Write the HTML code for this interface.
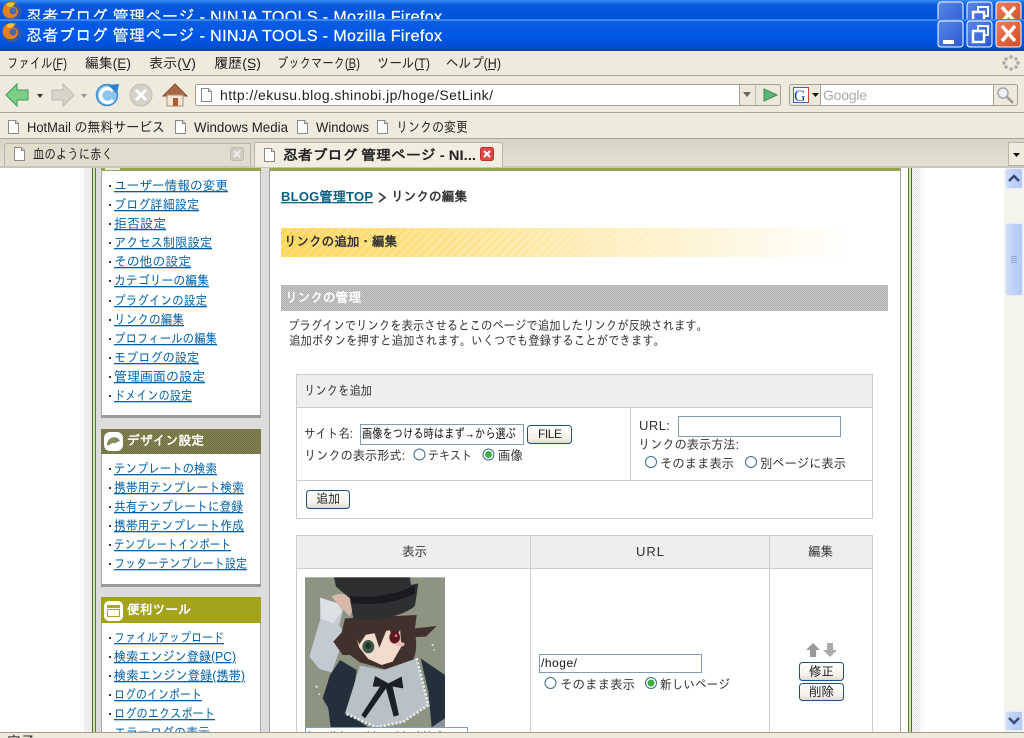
<!DOCTYPE html>
<html lang="ja"><head><meta charset="utf-8"><title>忍者ブログ 管理ページ</title>
<style>
html,body{margin:0;padding:0;width:1024px;height:738px;overflow:hidden;background:#fff}
svg{display:block;position:absolute;left:0;top:0}
text{font-family:"Liberation Sans","IPAGothic","Noto Sans CJK JP",sans-serif;font-size:13px;fill:#333;white-space:pre}
.m{font-size:14px;fill:#222}
.t{font-size:16px;fill:#fff;stroke:#fff;stroke-width:.25px}
.l{fill:#0060a8;text-decoration:underline}
.h{fill:#fff;font-weight:bold;font-size:13px}
.b{font-weight:bold}
</style></head><body>
<svg width="1024" height="738" viewBox="0 0 1024 738" xmlns="http://www.w3.org/2000/svg">
<defs>
<linearGradient id="tb" x1="0" y1="0" x2="0" y2="1"><stop offset="0" stop-color="#1a70ea"/><stop offset=".1" stop-color="#0a5ce0"/><stop offset=".5" stop-color="#0058e8"/><stop offset=".85" stop-color="#0050d8"/><stop offset="1" stop-color="#0a3fa8"/></linearGradient>
<linearGradient id="tb1" x1="0" y1="0" x2="0" y2="1"><stop offset="0" stop-color="#3a8cf2"/><stop offset=".25" stop-color="#0a58dc"/><stop offset="1" stop-color="#0052dc"/></linearGradient>
<linearGradient id="btn" x1="0" y1="0" x2="0" y2="1"><stop offset="0" stop-color="#fff"/><stop offset=".7" stop-color="#f3f1e8"/><stop offset="1" stop-color="#dcd8c8"/></linearGradient>
<linearGradient id="tabbar" x1="0" y1="0" x2="0" y2="1"><stop offset="0" stop-color="#d8d5c5"/><stop offset="1" stop-color="#e4e1d2"/></linearGradient>
<linearGradient id="yel" x1="0" y1="0" x2="1" y2="0"><stop offset="0" stop-color="#fdd555"/><stop offset=".45" stop-color="#fde9a8"/><stop offset="1" stop-color="#ffffff"/></linearGradient>
<linearGradient id="sb" x1="0" y1="0" x2="1" y2="0"><stop offset="0" stop-color="#d2dffb"/><stop offset=".5" stop-color="#bdd0f8"/><stop offset="1" stop-color="#b4c8f4"/></linearGradient>
<linearGradient id="blue" x1="0" y1="0" x2="1" y2="1"><stop offset="0" stop-color="#5a86e8"/><stop offset="1" stop-color="#2a58d0"/></linearGradient>
<linearGradient id="red" x1="0" y1="0" x2="1" y2="1"><stop offset="0" stop-color="#ea8060"/><stop offset="1" stop-color="#d04a20"/></linearGradient>
<pattern id="ol" width="2" height="2" patternUnits="userSpaceOnUse"><rect width="2" height="2" fill="#84844e"/><rect width="1" height="1" fill="#6f6f45"/><rect x="1" y="1" width="1" height="1" fill="#6f6f45"/></pattern>
<pattern id="ye" width="2" height="2" patternUnits="userSpaceOnUse"><rect width="2" height="2" fill="#aaaa22"/><rect width="1" height="1" fill="#9c9c18"/><rect x="1" y="1" width="1" height="1" fill="#9c9c18"/></pattern>
<pattern id="gb" width="2" height="2" patternUnits="userSpaceOnUse"><rect width="2" height="2" fill="#c4c4c4"/><rect width="1" height="1" fill="#b2b2b2"/><rect x="1" y="1" width="1" height="1" fill="#b2b2b2"/></pattern>
<pattern id="gt" width="2" height="2" patternUnits="userSpaceOnUse"><rect width="2" height="2" fill="#a4b45a"/><rect width="1" height="1" fill="#84963e"/><rect x="1" y="1" width="1" height="1" fill="#84963e"/></pattern>
<pattern id="dt" width="2" height="2" patternUnits="userSpaceOnUse"><rect width="2" height="2" fill="#f6f6f4"/><rect width="1" height="1" fill="#e4e4e4"/><rect x="1" y="1" width="1" height="1" fill="#e4e4e4"/></pattern>
<pattern id="st" width="6" height="6" patternUnits="userSpaceOnUse" patternTransform="rotate(-45)"><rect width="6" height="3" fill="#fff" opacity=".18"/></pattern>
<g id="doc"><path d="M.5.5H7.5L10.500 3.500V13.500H.5Z" fill="#fff" stroke="#8a8a8a"/><path d="M7.500.5V3.500H10.500" fill="#e0e0e0" stroke="#8a8a8a"/></g>
<g id="fx"><circle cx="10" cy="10" r="9.500" fill="#3a5aa8"/><path d="M2 4C4 0 10-1 15 1 11 1 11 3 12 5 16 5 17 10 15 13 12 17 6 17 3 14 0 11 0 7 2 4Z" fill="#e8801a"/><path d="M5 2C7 0 11 0 13 2L9 5 5 4Z" fill="#f8c040"/><circle cx="11" cy="9" r="3.500" fill="#4a68b8"/></g>
<g id="ro"><circle r="5.500" fill="#fff" stroke="#3a6a94"/></g>
<g id="rs"><circle r="5.500" fill="#fff" stroke="#3a6a94"/><circle r="3.500" fill="#3cb040"/></g>
<g id="wb">
<rect x="938" y="0" width="25" height="26" rx="3" fill="url(#blue)" stroke="#fff"/>
<rect x="967" y="0" width="25" height="26" rx="3" fill="url(#blue)" stroke="#fff"/>
<rect x="996" y="0" width="25" height="26" rx="3" fill="url(#red)" stroke="#fff"/>
<path d="M1002 5L1015 20M1015 5L1002 20" stroke="#fff" stroke-width="3.500"/>
<rect x="973" y="10" width="11" height="11" fill="none" stroke="#fff" stroke-width="2.500"/>
<path d="M978 9V5H988V14H985" fill="none" stroke="#fff" stroke-width="2"/>
<rect x="943" y="19" width="11" height="4" fill="#fff"/>
</g>
<clipPath id="c1"><rect x="0" y="0" width="1024" height="19"/></clipPath>
<clipPath id="c2"><rect x="0" y="168" width="1024" height="564"/></clipPath>
</defs>

<!-- title bars -->
<rect width="1024" height="19" fill="url(#tb1)"/>
<g clip-path="url(#c1)">
<use href="#fx" x="2" y="2"/>
<text x="26" y="22" class="t" textLength="416">忍者ブログ 管理ページ - NINJA TOOLS - Mozilla Firefox</text>
<use href="#wb" y="2"/>
</g>
<rect y="19" width="1024" height="32" fill="url(#tb)"/>
<rect y="19" width="1024" height="2" fill="#3a86f0"/>
<use href="#fx" x="2" y="23"/>
<text x="26" y="41" class="t" textLength="416">忍者ブログ 管理ページ - NINJA TOOLS - Mozilla Firefox</text>
<use href="#wb" y="21"/>

<!-- chrome -->
<rect y="51" width="1024" height="117" fill="#eeebdd"/>
<rect y="75" width="1024" height="1" fill="#aca899"/>
<rect y="112" width="1024" height="1" fill="#aca899"/>
<rect y="138" width="1024" height="1" fill="#aca899"/>
<rect y="139" width="1024" height="27" fill="url(#tabbar)"/>
<rect y="166" width="1024" height="2" fill="#c8c5b5"/>

<text x="7" y="68" class="m" textLength="60" lengthAdjust="spacingAndGlyphs">ファイル(F)</text>
<text x="85" y="68" class="m" textLength="46" lengthAdjust="spacingAndGlyphs">編集(E)</text>
<text x="149" y="68" class="m" textLength="47" lengthAdjust="spacingAndGlyphs">表示(V)</text>
<text x="214" y="68" class="m" textLength="47" lengthAdjust="spacingAndGlyphs">履歴(S)</text>
<text x="277" y="68" class="m" textLength="83" lengthAdjust="spacingAndGlyphs">ブックマーク(B)</text>
<text x="377" y="68" class="m" textLength="53" lengthAdjust="spacingAndGlyphs">ツール(T)</text>
<text x="446" y="68" class="m" textLength="55" lengthAdjust="spacingAndGlyphs">ヘルプ(H)</text>
<g fill="#222"><rect x="54" y="69" width="7" height="1"/><rect x="118" y="69" width="7" height="1"/><rect x="183" y="69" width="7" height="1"/><rect x="248" y="69" width="7" height="1"/><rect x="347" y="69" width="7" height="1"/><rect x="417" y="69" width="7" height="1"/><rect x="488" y="69" width="7" height="1"/></g>
<!-- throbber -->
<g fill="#aaa"><circle cx="1011" cy="57" r="1.700"/><circle cx="1016" cy="59" r="1.700"/><circle cx="1018" cy="63" r="1.700"/><circle cx="1016" cy="67" r="1.700"/><circle cx="1011" cy="69" r="1.700"/><circle cx="1006" cy="67" r="1.700"/><circle cx="1004" cy="63" r="1.700"/><circle cx="1006" cy="59" r="1.700"/></g>

<!-- nav icons -->
<path d="M6 95L17 84V90H28V100H17V106Z" fill="#7ccf88" stroke="#3f9a55"/>
<path d="M37 94H43L40 98Z" fill="#333"/>
<path d="M74 95L63 84V90H52V100H63V106Z" fill="#d8d6cc" stroke="#bcbab0"/>
<path d="M81 94H87L84 98Z" fill="#999"/>
<circle cx="107" cy="95" r="10.500" fill="#8cc4ee" stroke="#3f8ed0" stroke-width="1.500"/>
<path d="M113 91A7 7 0 1 0 113 100" fill="none" stroke="#fff" stroke-width="3.500"/>
<path d="M108 85L119 84 117 94Z" fill="#2f80d0"/>
<circle cx="141" cy="95" r="11" fill="#d4d2c8" stroke="#c0beb4"/>
<path d="M136 90L146 100M146 90L136 100" stroke="#fff" stroke-width="3"/>
<path d="M163 96L175 84 187 96Z" fill="#a86848" stroke="#8a5030"/>
<rect x="167" y="95" width="16" height="11" fill="#f2e6d2" stroke="#b09070"/>
<rect x="173" y="98" width="5" height="8" fill="#b05a38"/>

<!-- url bar -->
<rect x="195.500" y="84.500" width="585" height="21" rx="2" fill="#fff" stroke="#a5a294"/>
<rect x="739.500" y="84.500" width="41" height="21" rx="2" fill="#ece9da" stroke="#a5a294"/>
<rect x="755" y="85" width="1" height="20" fill="#c0bdaf"/>
<path d="M743 92H751L747 97Z" fill="#666"/>
<path d="M764 89L777 95 764 101Z" fill="#5cb878" stroke="#3a8a50"/>
<use href="#doc" x="201" y="88"/>
<text x="220" y="100" class="m" textLength="273">http://ekusu.blog.shinobi.jp/hoge/SetLink/</text>

<!-- search -->
<rect x="789.500" y="84.500" width="228" height="21" rx="2" fill="#ece9da" stroke="#a5a294"/>
<rect x="820.500" y="84.500" width="173" height="21" fill="#fff" stroke="#a5a294"/>
<rect x="793.500" y="87.500" width="15" height="15" fill="#fff" stroke="#3a6aa8"/>
<rect x="808" y="88" width="1" height="15" fill="#d04030"/>
<text x="794" y="101" style="font-family:'Liberation Serif',serif;font-size:16px;fill:#1a4a9a">G</text>
<path d="M812 93H819L815.500 97Z" fill="#111"/>
<text x="823" y="100" style="font-size:14px;fill:#aaa" textLength="44">Google</text>
<circle cx="1003" cy="93" r="5" fill="#eef3f8" stroke="#a5a8ac" stroke-width="1.500"/>
<path d="M1007 97L1013 103" stroke="#a09a88" stroke-width="2.500"/>

<!-- bookmarks -->
<use href="#doc" x="8" y="120"/><text x="27" y="132" class="m" textLength="138" lengthAdjust="spacingAndGlyphs">HotMail の無料サービス</text>
<use href="#doc" x="175" y="120"/><text x="194" y="132" class="m" textLength="94" lengthAdjust="spacingAndGlyphs">Windows Media</text>
<use href="#doc" x="297" y="120"/><text x="316" y="132" class="m" textLength="53" lengthAdjust="spacingAndGlyphs">Windows</text>
<use href="#doc" x="377" y="120"/><text x="396" y="132" class="m" textLength="72" lengthAdjust="spacingAndGlyphs">リンクの変更</text>

<!-- tabs -->
<path d="M4.500 166V146Q4.500 143.500 7 143.500H250.500V166" fill="#e0ddcd" stroke="#b8b5a5"/>
<use href="#doc" x="14" y="147"/>
<text x="33" y="159" class="m" textLength="80" lengthAdjust="spacingAndGlyphs">血のように赤く</text>
<rect x="230.500" y="147.500" width="13" height="13" rx="2" fill="#cfccc0" stroke="#c0bdb0"/>
<path d="M234 151L240 157M240 151L234 157" stroke="#eee" stroke-width="2"/>
<path d="M254.500 167V145Q254.500 142.500 257 142.500H500Q502.500 142.500 502.500 145V167" fill="#f1eee1" stroke="#b8b5a5"/>
<use href="#doc" x="264" y="148"/>
<text x="283" y="160" class="m b" textLength="193" lengthAdjust="spacingAndGlyphs">忍者ブログ 管理ページ - NI...</text>
<rect x="480.500" y="147.500" width="13" height="13" rx="2" fill="#e04848" stroke="#c03030"/>
<path d="M484 151L490 157M490 151L484 157" stroke="#fff" stroke-width="2"/>
<rect x="1008.500" y="142.500" width="16" height="23" fill="#eeebdd" stroke="#b8b5a5"/>
<path d="M1013 153H1020L1016.500 157Z" fill="#111"/>

<!-- page bg -->
<rect y="168" width="1024" height="564" fill="#fff"/>
<rect x="80" y="168" width="4" height="564" fill="#fafafa"/>
<rect x="84" y="168" width="8" height="564" fill="url(#dt)"/>
<rect x="92" y="168" width="1" height="564" fill="#4a6a30"/>
<rect x="93" y="168" width="2" height="564" fill="#d4e4b0"/>
<rect x="95" y="168" width="1" height="564" fill="#4f7a30"/>
<rect x="96" y="168" width="805" height="564" fill="#dcdcdc"/>
<rect x="900" y="168" width="1" height="564" fill="#a0a0a0"/>
<rect x="908" y="168" width="1" height="564" fill="#4f7a30"/>
<rect x="909" y="168" width="2" height="564" fill="#d4e4b0"/>
<rect x="911" y="168" width="1" height="564" fill="#4a6a30"/>
<rect x="912" y="168" width="8" height="564" fill="url(#dt)"/>
<rect x="920" y="168" width="4" height="564" fill="#fafafa"/>
<rect x="269" y="168" width="1" height="564" fill="#a0a0a0"/>
<rect x="270" y="168" width="630" height="564" fill="#fff"/>
<rect x="101" y="168" width="160" height="3" fill="url(#gt)"/>
<rect x="270" y="168" width="630" height="3" fill="url(#gt)"/>
<rect x="105" y="168" width="15" height="2" fill="#e8e8d8"/>

<!-- sidebar -->
<rect x="101" y="171" width="160" height="246" fill="#fff"/>
<rect x="101" y="171" width="1" height="246" fill="#a8a8a8"/><rect x="260" y="171" width="1" height="246" fill="#a8a8a8"/>
<rect x="101" y="415" width="160" height="3" fill="#9a9a9a"/>
<g fill="#333"><rect x="109" y="185" width="2" height="2"/><rect x="109" y="204" width="2" height="2"/><rect x="109" y="223" width="2" height="2"/><rect x="109" y="242" width="2" height="2"/><rect x="109" y="261" width="2" height="2"/><rect x="109" y="280" width="2" height="2"/><rect x="109" y="300" width="2" height="2"/><rect x="109" y="319" width="2" height="2"/><rect x="109" y="338" width="2" height="2"/><rect x="109" y="357" width="2" height="2"/><rect x="109" y="376" width="2" height="2"/><rect x="109" y="395" width="2" height="2"/></g>
<text x="114" y="190" class="l" textLength="114" lengthAdjust="spacingAndGlyphs">ユーザー情報の変更</text>
<text x="114" y="209" class="l" textLength="85" lengthAdjust="spacingAndGlyphs">ブログ詳細設定</text>
<text x="114" y="228" class="l" textLength="52" lengthAdjust="spacingAndGlyphs">拒否設定</text>
<text x="114" y="247" class="l" textLength="98" lengthAdjust="spacingAndGlyphs">アクセス制限設定</text>
<text x="114" y="266" class="l" textLength="77" lengthAdjust="spacingAndGlyphs">その他の設定</text>
<text x="114" y="285" class="l" textLength="95" lengthAdjust="spacingAndGlyphs">カテゴリーの編集</text>
<text x="114" y="305" class="l" textLength="93" lengthAdjust="spacingAndGlyphs">プラグインの設定</text>
<text x="114" y="324" class="l" textLength="70" lengthAdjust="spacingAndGlyphs">リンクの編集</text>
<text x="114" y="343" class="l" textLength="103" lengthAdjust="spacingAndGlyphs">プロフィールの編集</text>
<text x="114" y="362" class="l" textLength="85" lengthAdjust="spacingAndGlyphs">モブログの設定</text>
<text x="114" y="381" class="l" textLength="91" lengthAdjust="spacingAndGlyphs">管理画面の設定</text>
<text x="114" y="400" class="l" textLength="78" lengthAdjust="spacingAndGlyphs">ドメインの設定</text>

<rect x="101" y="429" width="160" height="25" fill="url(#ol)"/>
<rect x="104" y="432" width="19" height="19" rx="6" fill="#fff"/>
<path d="M107 445C107 436 118 435 120 441 118 441 116 444 113 443 111 443 110 446 107 445Z" fill="#8a8a60"/>
<text x="127" y="445" class="h" textLength="77" lengthAdjust="spacingAndGlyphs">デザイン設定</text>
<rect x="101" y="454" width="160" height="132" fill="#fff"/>
<rect x="101" y="454" width="1" height="132" fill="#a8a8a8"/><rect x="260" y="454" width="1" height="132" fill="#a8a8a8"/>
<rect x="101" y="584" width="160" height="3" fill="#9a9a9a"/>
<g fill="#333"><rect x="109" y="468" width="2" height="2"/><rect x="109" y="487" width="2" height="2"/><rect x="109" y="506" width="2" height="2"/><rect x="109" y="525" width="2" height="2"/><rect x="109" y="544" width="2" height="2"/><rect x="109" y="563" width="2" height="2"/></g>
<text x="114" y="473" class="l" textLength="103" lengthAdjust="spacingAndGlyphs">テンプレートの検索</text>
<text x="114" y="492" class="l" textLength="130" lengthAdjust="spacingAndGlyphs">携帯用テンプレート検索</text>
<text x="114" y="511" class="l" textLength="129" lengthAdjust="spacingAndGlyphs">共有テンプレートに登録</text>
<text x="114" y="530" class="l" textLength="130" lengthAdjust="spacingAndGlyphs">携帯用テンプレート作成</text>
<text x="114" y="549" class="l" textLength="117" lengthAdjust="spacingAndGlyphs">テンプレートインポート</text>
<text x="114" y="568" class="l" textLength="133" lengthAdjust="spacingAndGlyphs">フッターテンプレート設定</text>

<rect x="101" y="597" width="160" height="26" fill="url(#ye)"/>
<rect x="104" y="601" width="19" height="20" rx="5" fill="#fff"/>
<rect x="107" y="605" width="13" height="12" fill="#aaaa22"/><rect x="107" y="608" width="13" height="1" fill="#fff"/><rect x="108" y="610" width="11" height="6" fill="#fff"/>
<text x="127" y="614" class="h" textLength="64" lengthAdjust="spacingAndGlyphs">便利ツール</text>
<rect x="101" y="623" width="160" height="109" fill="#fff"/>
<rect x="101" y="623" width="1" height="109" fill="#a8a8a8"/><rect x="260" y="623" width="1" height="109" fill="#a8a8a8"/>
<g fill="#333"><rect x="109" y="637" width="2" height="2"/><rect x="109" y="656" width="2" height="2"/><rect x="109" y="675" width="2" height="2"/><rect x="109" y="694" width="2" height="2"/><rect x="109" y="713" width="2" height="2"/></g>
<text x="114" y="642" class="l" textLength="110" lengthAdjust="spacingAndGlyphs">ファイルアップロード</text>
<text x="114" y="661" class="l" textLength="122" lengthAdjust="spacingAndGlyphs">検索エンジン登録(PC)</text>
<text x="114" y="680" class="l" textLength="131" lengthAdjust="spacingAndGlyphs">検索エンジン登録(携帯)</text>
<text x="114" y="699" class="l" textLength="88" lengthAdjust="spacingAndGlyphs">ログのインポート</text>
<text x="114" y="718" class="l" textLength="101" lengthAdjust="spacingAndGlyphs">ログのエクスポート</text>
<g clip-path="url(#c2)"><text x="114" y="737" class="l" textLength="96" lengthAdjust="spacingAndGlyphs">エラーログの表示</text></g>

<!-- main -->
<text x="281" y="201" class="b" style="fill:#0a6080;text-decoration:underline" textLength="92">BLOG管理TOP</text>
<path d="M379 193L385 197.500 379 202" fill="none" stroke="#333" stroke-width="1.500"/>
<text x="391" y="201" class="b" textLength="76" lengthAdjust="spacingAndGlyphs">リンクの編集</text>
<rect x="281" y="228" width="570" height="29" fill="url(#yel)"/>
<rect x="281" y="228" width="570" height="29" fill="url(#st)"/>
<text x="284" y="246" class="b" textLength="113" lengthAdjust="spacingAndGlyphs">リンクの追加・編集</text>
<rect x="281" y="285" width="607" height="26" fill="url(#gb)"/>
<text x="285" y="302" class="h" textLength="76" lengthAdjust="spacingAndGlyphs">リンクの管理</text>
<text x="288" y="330" textLength="420" lengthAdjust="spacingAndGlyphs">プラグインでリンクを表示させるとこのページで追加したリンクが反映されます。</text>
<text x="289" y="345" textLength="376" lengthAdjust="spacingAndGlyphs">追加ボタンを押すと追加されます。いくつでも登録することができます。</text>

<!-- table 1 -->
<rect x="296.500" y="374.500" width="576" height="144" fill="#fff" stroke="#ccc"/>
<rect x="297" y="375" width="575" height="32" fill="#eee"/>
<rect x="297" y="407" width="575" height="1" fill="#ccc"/>
<rect x="297" y="480" width="575" height="1" fill="#ccc"/>
<rect x="630" y="408" width="1" height="72" fill="#ccc"/>
<text x="304" y="395" textLength="68" lengthAdjust="spacingAndGlyphs">リンクを追加</text>
<text x="304" y="438" textLength="49" lengthAdjust="spacingAndGlyphs">サイト名:</text>
<rect x="360.500" y="424.500" width="163" height="20" fill="#fff" stroke="#7f9db9"/>
<text x="362" y="438" style="fill:#111" textLength="154" lengthAdjust="spacingAndGlyphs">画像をつける時はまず→から選ぶ</text>
<rect x="527.500" y="425.500" width="44" height="18" rx="3" fill="url(#btn)" stroke="#1c5180"/>
<text x="538" y="438" style="font-size:12px;fill:#222" textLength="24">FILE</text>
<text x="304" y="460" textLength="101" lengthAdjust="spacingAndGlyphs">リンクの表示形式:</text>
<use href="#ro" x="419.500" y="454.500"/>
<text x="428" y="460" textLength="44" lengthAdjust="spacingAndGlyphs">テキスト</text>
<use href="#rs" x="488.500" y="454.500"/>
<text x="498" y="460" textLength="25" lengthAdjust="spacingAndGlyphs">画像</text>
<text x="639" y="430" textLength="31">URL:</text>
<rect x="678.500" y="416.500" width="162" height="20" fill="#fff" stroke="#7f9db9"/>
<text x="638" y="449" textLength="101" lengthAdjust="spacingAndGlyphs">リンクの表示方法:</text>
<use href="#ro" x="651" y="462"/>
<text x="660" y="468" textLength="74" lengthAdjust="spacingAndGlyphs">そのまま表示</text>
<use href="#ro" x="751" y="462"/>
<text x="760" y="468" textLength="86" lengthAdjust="spacingAndGlyphs">別ページに表示</text>
<rect x="306.500" y="490.500" width="43" height="18" rx="3" fill="url(#btn)" stroke="#1c5180"/>
<text x="316" y="503" style="fill:#222" textLength="24" lengthAdjust="spacingAndGlyphs">追加</text>

<!-- table 2 -->
<rect x="296.500" y="535.500" width="576" height="210" fill="#fff" stroke="#ccc"/>
<rect x="297" y="536" width="575" height="32" fill="#eee"/>
<rect x="297" y="568" width="575" height="1" fill="#ccc"/>
<rect x="530" y="536" width="1" height="200" fill="#ccc"/>
<rect x="769" y="536" width="1" height="200" fill="#ccc"/>
<text x="402" y="556" textLength="25" lengthAdjust="spacingAndGlyphs">表示</text>
<text x="636" y="556" textLength="28">URL</text>
<text x="808" y="556" textLength="25" lengthAdjust="spacingAndGlyphs">編集</text>

<!-- character image -->
<g transform="translate(300 575) scale(.33333)">
<rect x="15" y="7" width="420" height="450" fill="#8d9481"/>
<path d="M28 245L60 135 62 70 130 100 118 150 135 180 95 292 58 282Z" fill="#c4cad2"/>
<path d="M60 68L115 85 125 110 100 145 62 130Z" fill="#dde1e6"/>
<path d="M95 65C115 50 150 55 165 80L150 125C130 105 110 85 95 65Z" fill="#d8b8a8"/>
<path d="M135 130L350 120 345 160 410 153 378 185 347 186C352 225 345 262 318 282L288 292 180 262 150 240 128 240 100 200 125 172Z" fill="#41312c"/>
<path d="M168 185L300 160 304 215 278 260 245 270 205 252 178 218Z" fill="#f3dccd"/>
<path d="M165 130L332 125 316 215 302 160 282 205 265 152 238 218 216 152 178 208 165 182Z" fill="#41312c"/>
<ellipse cx="205" cy="215" rx="18" ry="20" fill="#3e5a48"/><ellipse cx="205" cy="212" rx="9" ry="10" fill="#23302a"/>
<ellipse cx="284" cy="187" rx="16" ry="19" fill="#5a1820"/><circle cx="288" cy="182" r="4" fill="#d88"/>
<ellipse cx="300" cy="208" rx="14" ry="7" fill="#eeb8b0"/>
<path d="M102 7H330L333 30 355 25 345 92C320 120 220 145 160 132L150 70 108 35Z" fill="#2d2f31"/>
<path d="M150 62C200 72 290 60 345 30L345 55C290 85 210 92 152 84Z" fill="#191b20"/>
<path d="M90 300L120 255 170 285 150 420 205 457H92L85 400 68 370ZM362 250L435 300V430L395 457 385 350Z" fill="#23303c"/>
<path d="M435 430V457H395Z" fill="#8d9298"/>
<path d="M180 272L250 285 350 250 385 390 310 440 230 457 135 415 165 320Z" fill="#b8c0c8"/>
<path d="M350 250L385 390 310 440 230 457 135 415" fill="none" stroke="#e8ecef" stroke-width="8" stroke-dasharray="7 5"/>
<path d="M225 303L265 325 305 305 310 340 278 335 297 420 281 425 258 340 195 430 184 420 240 335 218 335Z" fill="#1b1f26"/>
<circle cx="398" cy="210" r="3.500" fill="#d8e0e0"/><circle cx="403" cy="224" r="2.500" fill="#d8e0e0"/><circle cx="50" cy="335" r="4" fill="#c8d0c8"/><circle cx="58" cy="358" r="2.500" fill="#eee"/>
</g>
<rect x="305.500" y="727.500" width="162" height="10" fill="#fff" stroke="#7f9db9"/>
<text x="308" y="741" style="fill:#111" textLength="150">http://ekusu.blog.shinobi.jp/img</text>

<rect x="539.500" y="654.500" width="162" height="18" fill="#fff" stroke="#7f9db9"/>
<text x="541" y="667" style="fill:#111;font-size:12px" textLength="36">/hoge/</text>
<use href="#ro" x="550.500" y="683"/>
<text x="560" y="689" textLength="75" lengthAdjust="spacingAndGlyphs">そのまま表示</text>
<use href="#rs" x="651" y="683"/>
<text x="660" y="689" textLength="70" lengthAdjust="spacingAndGlyphs">新しいページ</text>

<path d="M806 650L813 643 820 650H816V657H810V650Z" fill="#999"/>
<path d="M823 650L830 657 837 650H833V643H827V650Z" fill="#aaa"/>
<rect x="799.500" y="662.500" width="44" height="18" rx="3" fill="url(#btn)" stroke="#1c5180"/>
<text x="809" y="676" style="fill:#222" textLength="25" lengthAdjust="spacingAndGlyphs">修正</text>
<rect x="799.500" y="683.500" width="44" height="17" rx="3" fill="url(#btn)" stroke="#1c5180"/>
<text x="809" y="696" style="fill:#222" textLength="25" lengthAdjust="spacingAndGlyphs">削除</text>

<!-- scrollbar -->
<rect x="1004" y="168" width="20" height="564" fill="#f4f3ec"/>
<rect x="1005.500" y="168.500" width="17" height="20" rx="2" fill="url(#sb)" stroke="#e6ecfa"/>
<path d="M1009 181L1014 176 1019 181" fill="none" stroke="#3a4a78" stroke-width="2.500"/>
<rect x="1005.500" y="223.500" width="17" height="72" rx="2" fill="url(#sb)" stroke="#e6ecfa"/>
<g fill="#8ea8dc"><rect x="1011" y="256" width="6" height="1"/><rect x="1011" y="258" width="6" height="1"/><rect x="1011" y="260" width="6" height="1"/><rect x="1011" y="262" width="6" height="1"/></g>
<rect x="1005.500" y="711.500" width="17" height="19" rx="2" fill="url(#sb)" stroke="#e6ecfa"/>
<path d="M1009 718L1014 723 1019 718" fill="none" stroke="#3a4a78" stroke-width="2.500"/>

<!-- status bar -->
<rect y="732" width="1024" height="6" fill="#eeebdd"/>
<rect y="732" width="1024" height="1" fill="#a09d8d"/>
<text x="7" y="746" class="m" textLength="28">完了</text>
</svg>
</body></html>
